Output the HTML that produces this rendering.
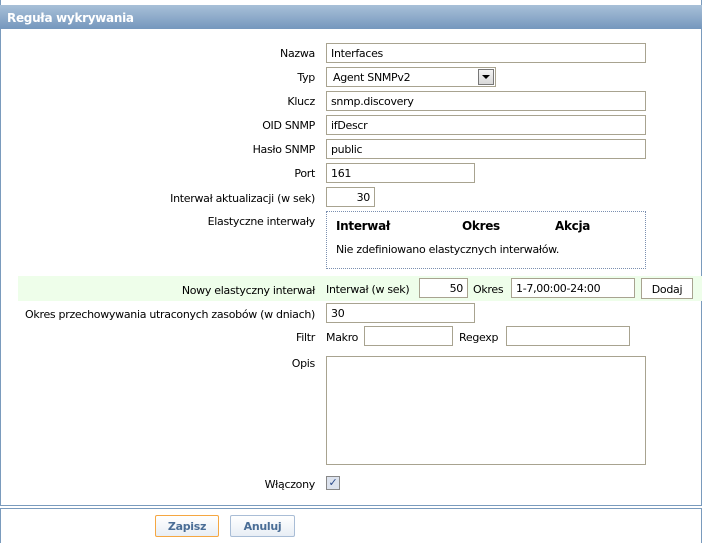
<!DOCTYPE html>
<html><head><meta charset="utf-8"><style>
*{box-sizing:border-box;margin:0;padding:0}
body{width:702px;height:543px;background:#fff;font-family:"DejaVu Sans","Liberation Sans",sans-serif;font-size:11px;color:#000;position:relative;overflow:hidden;letter-spacing:-0.3px}
.panel{position:absolute;left:0;top:0;width:702px;height:506px;border:1px solid #7a9bbd;border-top:none}
.hdr{position:absolute;left:0;top:5px;width:702px;height:24px;background:linear-gradient(#a8c0d8,#7597bd);color:#fff;font-weight:bold;font-size:12px;padding:6px 0 0 7px}
.top{position:absolute;left:0;top:0;width:702px;height:5px;background:#fff}
.lbl{position:absolute;right:387px;text-align:right;white-space:nowrap}
.in{position:absolute;border:1px solid #a8a390;background:#fff;height:20px;padding:3px 0 0 4px;white-space:nowrap}
.t{position:absolute;white-space:nowrap}
.btn{position:absolute;border:1px solid #a8a390;background:#fff;height:21px;text-align:center;padding-top:4px}
.fb{position:absolute;top:515px;height:22px;border-radius:2px;background:linear-gradient(#fff,#e8eef5);color:#4a6d96;font-weight:bold;text-align:center;padding-top:4px}
</style></head><body>
<div class="panel"></div>
<div class="hdr">Reguła wykrywania</div>
<div class="lbl" style="top:47px">Nazwa</div><div class="in" style="left:326px;top:43px;width:320px">Interfaces</div>
<div class="lbl" style="top:71px">Typ</div><div class="in" style="left:326px;top:67px;width:170px;padding-left:6px">Agent SNMPv2</div>
<div style="position:absolute;left:478px;top:69px;width:16px;height:16px;border:1px solid #777;background:linear-gradient(#f4f4f4,#d8d8d8)"><div style="position:absolute;left:3px;top:5px;border-left:4px solid transparent;border-right:4px solid transparent;border-top:4px solid #000"></div></div>
<div class="lbl" style="top:95px">Klucz</div><div class="in" style="left:326px;top:91px;width:320px">snmp.discovery</div>
<div class="lbl" style="top:119px">OID SNMP</div><div class="in" style="left:326px;top:115px;width:320px">ifDescr</div>
<div class="lbl" style="top:143px">Hasło SNMP</div><div class="in" style="left:326px;top:139px;width:320px">public</div>
<div class="lbl" style="top:167px">Port</div><div class="in" style="left:326px;top:163px;width:149px">161</div>
<div class="lbl" style="top:192px">Interwał aktualizacji (w sek)</div><div class="in" style="left:326px;top:187px;width:49px;text-align:right;padding-right:4px">30</div>
<div class="lbl" style="top:215px">Elastyczne interwały</div>
<div style="position:absolute;left:326px;top:211px;width:320px;height:58px;border:1px dotted #7a8fb0"></div>
<div class="t" style="left:336px;top:219px;font-weight:bold;font-size:12px">Interwał</div>
<div class="t" style="left:462px;top:219px;font-weight:bold;font-size:12px">Okres</div>
<div class="t" style="left:555px;top:219px;font-weight:bold;font-size:12px">Akcja</div>
<div class="t" style="left:336px;top:243px">Nie zdefiniowano elastycznych interwałów.</div>
<div style="position:absolute;left:18px;top:276px;width:684px;height:25px;background:#eefeea"></div>
<div class="lbl" style="top:284px">Nowy elastyczny interwał</div>
<div class="t" style="left:326px;top:283px">Interwał (w sek)</div>
<div class="in" style="left:419px;top:278px;width:49px;text-align:right;padding-right:4px">50</div>
<div class="t" style="left:473px;top:283px">Okres</div>
<div class="in" style="left:511px;top:278px;width:124px">1-7,00:00-24:00</div>
<div class="btn" style="left:641px;top:278px;width:52px">Dodaj</div>
<div class="lbl" style="top:308px">Okres przechowywania utraconych zasobów (w dniach)</div><div class="in" style="left:326px;top:303px;width:149px">30</div>
<div class="lbl" style="top:331px">Filtr</div>
<div class="t" style="left:326px;top:331px">Makro</div><div class="in" style="left:364px;top:326px;width:89px"></div>
<div class="t" style="left:459px;top:331px">Regexp</div><div class="in" style="left:506px;top:326px;width:124px"></div>
<div class="lbl" style="top:357px">Opis</div><div class="in" style="left:326px;top:356px;width:320px;height:109px"></div>
<div class="lbl" style="top:478px">Włączony</div>
<div style="position:absolute;left:326px;top:476px;width:14px;height:14px;border:1px solid #888;background:#dde3ee;color:#2a4a8a;font-size:11px;line-height:12px;text-align:center">✓</div>
<div style="position:absolute;left:0;top:508px;width:702px;height:35px;border:1px solid #7a9bbd;border-bottom:none"></div>
<div class="fb" style="left:155px;width:64px;border:1px solid #f5a742">Zapisz</div>
<div class="fb" style="left:230px;width:65px;border:1px solid #a9bdd6">Anuluj</div>
</body></html>
